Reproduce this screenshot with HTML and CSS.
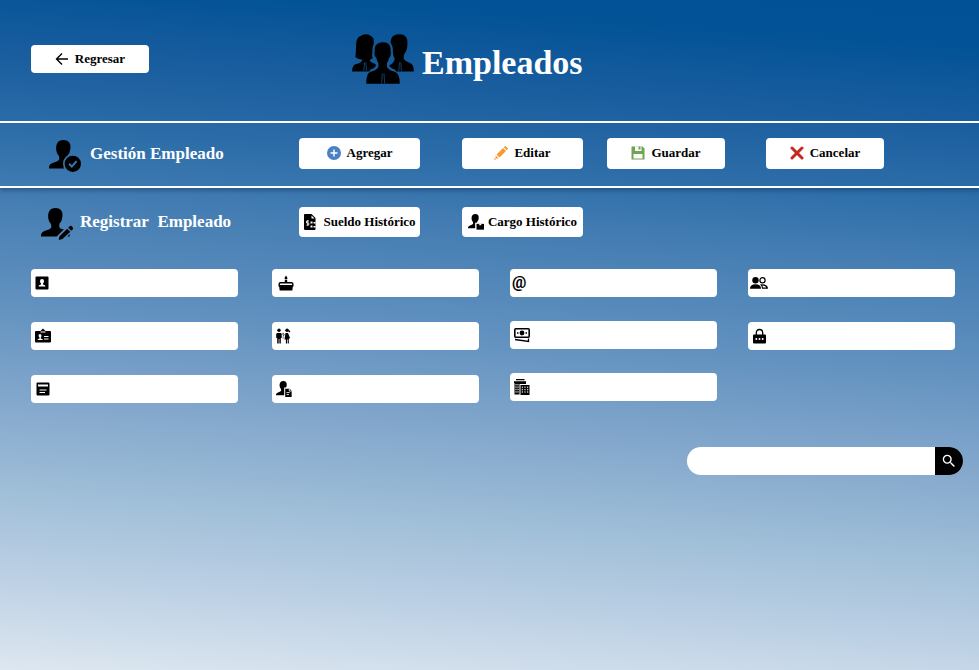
FILE: index.html
```html
<!DOCTYPE html>
<html lang="es">
<head>
<meta charset="utf-8">
<meta name="viewport" content="width=device-width, initial-scale=1">
<title>Empleados</title>
<link rel="stylesheet" href="styles.css">
</head>
<body>
<svg class="defs" aria-hidden="true">
  <defs>
    <path id="bust" d="M42 0C57 0 65 9 63 25Q62 38 54 46Q52 56 57 60Q80 66 84 76V84H0V79Q2 70 12 67Q28 62 30 57Q31 50 28 45C18 34 16 0 42 0Z"/>
    <mask id="cut-badge"><rect width="94" height="94" fill="#fff"/><circle cx="70" cy="70" r="29"/></mask>
    <mask id="cut-pen"><rect width="94" height="94" fill="#fff"/><path d="M52 94L46 84L86 44L99 57L70 94Z"/></mask>
    <mask id="cut-center"><rect width="188" height="152" fill="#fff"/><path d="M93 17C114 17 126 32 124 54Q128 74 117 84L113 96Q116 104 130 108L138 120H48L56 108Q70 104 73 96L70 84Q58 74 62 54C60 32 72 17 93 17Z"/></mask>
  </defs>
</svg>

<header class="top">
  <div>
    <button type="button" class="btn btn-back">
      <svg class="ico" viewBox="0 0 14 14"><path d="M13 7H2M7 1.500L1.500 7L7 12.500" fill="none" stroke="#000" stroke-width="1.400"/></svg>Regresar
    </button>
  </div>
  <h1 class="title">
    <svg class="title-ico" viewBox="0 0 188 152">
      <g mask="url(#cut-center)">
        <path d="M10 70Q12 56 12 36Q12 10 26 6Q34 0 42 1Q50 1 56 5Q66 10 66 20V72Q54 76 54 82Q58 86 72 92V114H0Q0 94 12 91Q28 88 32 78Q18 78 10 70Z"/>
        <path d="M142 1C160-1 170 12 168 26Q170 46 158 62L157 76Q162 84 176 88Q188 92 188 114H112V96Q126 90 130 76L124 62Q112 30 120 12Q127 1 142 1Z"/>
      </g>
      <path d="M93 25C109 24 119 34 117 52Q121 64 112 74Q110 84 106 88V100Q112 110 130 115Q145 119 145 151H43Q43 119 56 115Q74 110 80 100V88Q76 84 74 74Q65 64 69 52C67 36 76 26 93 25Z"/>
      <path d="M92 120L90 150M97 120L99 150M38 86L36 112M42 86L44 112M144 86L142 112M148 86L150 112" stroke="#185c9e" stroke-width="2"/>
    </svg>
    <span>Empleados</span>
  </h1>
</header>

<section class="bar bar-manage">
  <h2 class="heading heading-manage">
    <svg class="heading-ico" viewBox="0 0 94 94"><g mask="url(#cut-badge)"><use href="#bust"/></g><circle cx="70" cy="70" r="24"/><path d="M59 70L67 78L81 62" fill="none" stroke="#3b75ae" stroke-width="6"/></svg>
    Gestión Empleado
  </h2>
  <button type="button" class="btn btn-wide">
    <svg class="ico" viewBox="0 0 14 14"><circle cx="7" cy="7" r="7" fill="#4a80c4"/><path d="M7 3.500V10.500M3.500 7H10.500" stroke="#fff" stroke-width="1.400"/></svg>Agregar
  </button>
  <button type="button" class="btn btn-wide">
    <svg class="ico" viewBox="0 0 14 14" fill="#f59a31"><path d="M2.500 8.500L9 2L12 5L5.500 11.500ZM9.800 1.200L10.600 .4Q11.300-.2 12 .4L13.600 2Q14.200 2.700 13.600 3.400L12.800 4.200ZM1.800 9.400L4.600 12.200L2.800 12.700L1.300 11.200ZM.8 11.800L2.200 13.200L.2 13.900Z"/></svg>Editar
  </button>
  <button type="button" class="btn">
    <svg class="ico" viewBox="0 0 14 14"><path d="M1 .5H11.500L13.500 2.500V13.500H.5V1Z" fill="#6fa453"/><path d="M4 .5H10.500V5H4ZM2.500 8H11.500V12.500H2.500Z" fill="#fff"/><path d="M7.500 .5H9.500V3.500H7.500Z" fill="#6fa453"/></svg>Guardar
  </button>
  <button type="button" class="btn">
    <svg class="ico" viewBox="0 0 14 14"><path d="M2 2L12 12M12 2L2 12" stroke="#c5281c" stroke-width="3" stroke-linecap="round"/></svg>Cancelar
  </button>
</section>

<section class="bar bar-register">
  <h2 class="heading heading-register">
    <svg class="heading-ico" viewBox="0 0 94 94"><g mask="url(#cut-pen)"><use href="#bust"/></g><path d="M54 84L77 61L86 70L63 91L52 94ZM80 58L85 53Q89 51 92 55L94 59Q95 62 92 64L89 67Z"/></svg>
    Registrar&nbsp; Empleado
  </h2>
  <button type="button" class="btn btn-wide">
    <svg class="ico ico-file" viewBox="0 0 14 16"><path d="M1 1Q1 0 2 0H8.500L12.500 4V15Q12.500 16 11.500 16H2Q1 16 1 15Z"/><path d="M8.500 1.500V4.500H11.500Z" fill="#fff"/><path d="M6 7H3.500V9H5.800V11H3.500M4.700 6V12" fill="none" stroke="#fff" stroke-width=".8"/><path d="M7.500 7.500H9.500V9.500H7.500ZM7.500 11.500H9.500V13.500H7.500ZM10.500 8H12.500V9.500H10.500ZM10.500 12H12.500V13.500H10.500Z" fill="#fff"/></svg>Sueldo Histórico
  </button>
  <button type="button" class="btn btn-wide btn-close">
    <svg class="ico-lg" viewBox="0 0 94 94"><use href="#bust"/><path d="M42 51H94V94H42Z" fill="#fff"/><path d="M50 58H94V92H50Z"/><path d="M66 58H78V66H66Z" fill="#fff"/></svg>Cargo Histórico
  </button>
</section>

<main>
  <form class="fields">
    <div class="col">
      <label class="field"><svg class="ico" viewBox="0 0 14 14"><rect x=".5" y=".5" width="13" height="13" rx="1"/><path d="M7 3Q9 3 9 5Q9 6.500 8 7.500V8.500Q10.500 9 10.500 10.500H3.500Q3.500 9 6 8.500V7.500Q5 6.500 5 5Q5 3 7 3Z" fill="#fff"/></svg><input type="text" aria-label="Nombre"></label>
      <label class="field"><svg class="ico-lg" viewBox="0 0 16 16"><path d="M1 3H5.500L8 .5L10.500 3H15Q16 3 16 4V13.500Q16 14.500 15 14.500H1Q0 14.500 0 13.500V4Q0 3 1 3Z"/><path d="M5.500 4H10.500M9 8.500H13.500M9 11H13.500" fill="none" stroke="#fff"/><path d="M5 6Q6.500 6 6.500 7.500Q6.500 9 5.800 9.500V10.500Q8 11 8 12H2.500Q2.500 11 4.500 10.500V9.500Q3.500 8.500 3.500 7.500Q3.500 6 5 6Z" fill="#fff"/></svg><input type="text" aria-label="Identificación"></label>
      <label class="field"><svg class="ico-lg" viewBox="0 0 16 16"><rect x="1.500" y="1.500" width="13" height="13" rx="1"/><path d="M3 3.500H13V5.500H3Z" fill="#fff"/><path d="M4.500 9H11.500M4.500 11.500H10" stroke="#fff"/></svg><input type="text" aria-label="Apellido"></label>
    </div>
    <div class="col">
      <label class="field field-inset"><svg class="ico-lg" viewBox="0 0 16 16"><path d="M8 .5L9.500 3Q9.500 4.500 8 4.500Q6.500 4.500 6.500 3ZM6.800 5H9.200V8H6.800Z"/><path d="M2.500 7.700H13.500Q14.800 7.700 14.800 9V10.700H1.200V9Q1.200 7.700 2.500 7.700Z" fill="none" stroke="#000" stroke-width="1.400"/><path d="M1 10.500Q2.800 12 4.500 10.500Q6.200 12 8 10.500Q9.800 12 11.500 10.500Q13.200 12 15 10.500L14.300 15.500H1.700Z"/></svg><input type="text" aria-label="Fecha de nacimiento"></label>
      <label class="field"><svg class="ico-lg" viewBox="0 0 16 16"><circle cx="3" cy="2.300" r="1.700"/><circle cx="11" cy="2.300" r="1.700"/><path d="M1 5H5L5.700 6V10H4.800V15.500H3.400V11H2.700V15.500H1.200V10H.2V6ZM9.500 5H12L14 10L12.800 11V15.500H11.700V11.500H11V15.500H9.900V11.500H8.500L9 8Z"/><path d="M12 2L14 4" stroke="#000" stroke-width="1.200"/><path d="M6.300 6.500Q6.500 5.300 7.500 5.500Q8.500 6 7.800 7.200L7.200 8.500M7.100 9.500V10.500" fill="none" stroke="#000" stroke-width=".9"/></svg><input type="text" aria-label="Sexo"></label>
      <label class="field"><svg class="ico-lg" viewBox="0 0 94 94"><use href="#bust"/><path d="M48 38H94V94H48Z" fill="#fff"/><path d="M54 45H80L92 57V94H54Z"/><path d="M78 45V59H92M62 68H80M62 80H76" fill="none" stroke="#fff" stroke-width="5"/></svg><input type="text" aria-label="Cargo"></label>
    </div>
    <div class="col col-tight">
      <label class="field field-flush"><span class="at" aria-hidden="true">@</span><input type="email" aria-label="Correo"></label>
      <label class="field"><svg class="ico-lg" viewBox="0 0 16 16"><rect x=".8" y="1.800" width="14.400" height="8.400" rx="1" fill="none" stroke="#000" stroke-width="1.600"/><circle cx="8" cy="6" r="2.400"/><path d="M3 6H4.500M11.500 6H13" stroke="#000" stroke-width="1.500"/><path d="M1 12.500L14.500 14.500V11.500" fill="none" stroke="#000" stroke-width="1.300"/></svg><input type="text" aria-label="Sueldo"></label>
      <label class="field"><svg class="ico-lg" viewBox="0 0 16 16"><path d="M2 0H10.500V1.300H2ZM0 2.300H12V5H5.500V15.500H.5V4H0ZM6.500 6H15.500V16H6.500Z"/><path d="M2 5V14M4 5V14M8.300 7.500V14.500M11 7.500V14.500M13.700 7.500V14.500" stroke="#fff" stroke-width="1" stroke-dasharray="1.400 1"/></svg><input type="text" aria-label="Departamento"></label>
    </div>
    <div class="col">
      <label class="field field-flush"><svg class="ico-people" viewBox="0 0 18 14"><circle cx="5.500" cy="4.200" r="3.200"/><path d="M0 12.800Q0 8.300 5.500 8.300Q11 8.300 11 12.800ZM12 12.800H18Q18 8.300 12 8.300Q10.800 8.300 10 8.600Q12 10.200 12 12.800Z"/><circle cx="12.500" cy="4.200" r="2.600" fill="none" stroke="#000" stroke-width="1.200"/><path d="M12.900 11.500Q12.800 10.500 12.300 9.600Q15.500 9.800 16.300 11.500Z" fill="#fff"/></svg><input type="text" aria-label="Usuario"></label>
      <label class="field"><svg class="ico-lg" viewBox="0 0 16 16"><path d="M4.300 7V5Q4.300 1.500 7.500 1.500Q10.700 1.500 10.700 5V7" fill="none" stroke="#000" stroke-width="1.300"/><rect x="1" y="6.500" width="13" height="9" rx="1"/><circle cx="4.300" cy="11" r="1" fill="#fff"/><circle cx="7.500" cy="11" r="1" fill="#fff"/><circle cx="10.700" cy="11" r="1" fill="#fff"/></svg><input type="password" aria-label="Contraseña"></label>
    </div>
  </form>
  <form class="search" role="search">
    <input type="search" aria-label="Buscar">
    <button type="button" aria-label="Buscar"><svg class="ico" viewBox="2 2 20 20"><path fill="#fff" d="M15.500 14h-.79l-.28-.27A6.470 6.470 0 0 0 16 9.500 6.500 6.500 0 1 0 9.500 16c1.610 0 3.090-.59 4.230-1.570l.27.28v.79l5 4.990L20.490 19l-4.990-5zm-6 0C7.010 14 5 11.990 5 9.500S7.010 5 9.500 5 14 7.010 14 9.500 11.990 14 9.500 14z"/></svg></button>
  </form>
</main>
</body>
</html>
```
FILE: styles.css
```css
* {
  box-sizing: border-box;
}

body {
  margin: 0;
  min-height: 100vh;
  font-family: "Liberation Serif", serif;
  font-weight: 700;
  color: #000;
  background: linear-gradient(184deg, #005195 0%, #015296 6%, #1b5e9f 17%, #2d6ea9 27%, #477fb4 37%, #6191bf 50%, #80a5cb 62%, #a0bfd8 76%, #b9cee3 86%, #dde7f0 100%);
}

.defs {
  position: absolute;
  width: 0;
  height: 0;
}

svg {
  display: block;
  flex: none;
}

h1,
h2 {
  margin: 0;
  color: #fff;
}

.top {
  display: grid;
  grid-template-columns: 352fr 627fr;
  align-items: center;
  min-height: 123px;
  padding-bottom: 4px;
  border-bottom: 2px solid #fff;
}

.title {
  display: flex;
  align-items: center;
  gap: 8px;
  font-size: 34px;
  line-height: 40px;
}

.title span {
  padding-top: 8px;
}

.title-ico {
  width: 62px;
  height: 50px;
}

.btn {
  display: flex;
  align-items: center;
  justify-content: center;
  gap: 6px;
  width: 118px;
  height: 31px;
  padding: 0;
  border: 0;
  border-radius: 4px;
  background: #fff;
  color: #000;
  font: inherit;
  font-size: 13px;
  white-space: nowrap;
  cursor: pointer;
}

.btn-back {
  height: 28px;
  margin-left: 31px;
}

.btn-wide {
  width: 121px;
}

.btn-close {
  gap: 4px;
}

.ico {
  width: 14px;
  height: 14px;
}

.ico-file,
.ico-lg {
  height: 16px;
}

.ico-lg {
  width: 16px;
}

.ico-people {
  width: 18px;
  height: 14px;
}

.bar {
  display: grid;
  grid-template-columns: 299fr 163fr 145fr 159fr 213fr;
  align-items: center;
}

.bar-manage {
  min-height: 65px;
  padding-bottom: 2px;
  border-bottom: 2px solid #fff;
  box-shadow: 0 3px 4px rgba(0, 30, 70, 0.3);
}

.bar-manage .btn {
  margin-bottom: 1px;
}

.bar-register {
  min-height: 68px;
}

.bar-register .btn {
  height: 30px;
}

.heading {
  display: flex;
  align-items: center;
  font-size: 17px;
  line-height: 20px;
  white-space: nowrap;
}

.heading-ico {
  width: 32px;
  height: 32px;
  margin-top: 4px;
}

.heading-manage {
  gap: 9px;
  padding-left: 49px;
}

.heading-register {
  gap: 7px;
  padding-left: 41px;
}

.fields {
  display: grid;
  grid-template-columns: 241fr 238fr 238fr 207fr;
  padding: 13px 24px 0 31px;
}

.col {
  display: flex;
  flex-direction: column;
  gap: 25px;
}

.col-tight {
  gap: 24px;
}

.field {
  display: flex;
  align-items: center;
  gap: 6px;
  width: 207px;
  height: 28px;
  padding: 0 4px;
  border-radius: 4px;
  background: #fff;
}

.field-flush {
  padding-left: 2px;
}

.field-inset {
  padding-left: 6px;
}

.field input {
  flex: 1;
  min-width: 0;
  height: 100%;
  padding: 0;
  border: 0;
  outline: 0;
  background: none;
  font: inherit;
  font-size: 13px;
}

.at {
  font-family: Roboto, sans-serif;
  font-weight: 700;
  font-size: 16px;
  line-height: 28px;
}

.search {
  display: flex;
  width: 276px;
  height: 28px;
  margin: 44px 16px 0 auto;
  border-radius: 14px;
  background: #fff;
  overflow: hidden;
}

.search input {
  flex: 1;
  min-width: 0;
  padding: 0 14px;
  border: 0;
  outline: 0;
  background: none;
  font: inherit;
  font-size: 13px;
}

.search button {
  display: flex;
  align-items: center;
  justify-content: center;
  width: 28px;
  padding: 0;
  border: 0;
  background: #000;
  cursor: pointer;
}
```
